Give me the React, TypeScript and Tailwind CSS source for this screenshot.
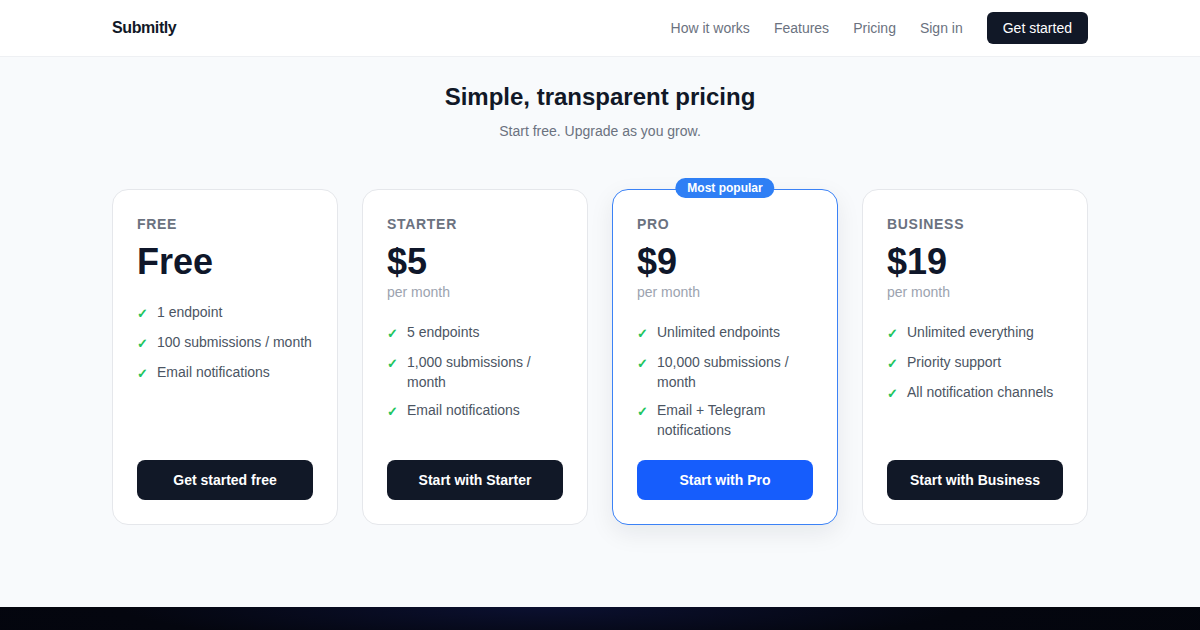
import React from "react";

type Plan = {
  label: string;
  price: string;
  perMonth: boolean;
  features: string[];
  cta: string;
  popular?: boolean;
};

const PLANS: Plan[] = [
  {
    label: "FREE",
    price: "Free",
    perMonth: false,
    features: ["1 endpoint", "100 submissions / month", "Email notifications"],
    cta: "Get started free",
  },
  {
    label: "STARTER",
    price: "$5",
    perMonth: true,
    features: ["5 endpoints", "1,000 submissions / month", "Email notifications"],
    cta: "Start with Starter",
  },
  {
    label: "PRO",
    price: "$9",
    perMonth: true,
    features: ["Unlimited endpoints", "10,000 submissions / month", "Email + Telegram notifications"],
    cta: "Start with Pro",
    popular: true,
  },
  {
    label: "BUSINESS",
    price: "$19",
    perMonth: true,
    features: ["Unlimited everything", "Priority support", "All notification channels"],
    cta: "Start with Business",
  },
];

function PlanCard({ plan }: { plan: Plan }) {
  return (
    <div
      className={
        "relative flex flex-col rounded-2xl border bg-white p-6 " +
        (plan.popular
          ? "border-[#3b82f6] shadow-[0_8px_24px_rgba(15,23,42,0.08)]"
          : "border-[#e5e7eb]")
      }
    >
      {plan.popular && (
        <span className="absolute -top-[12px] left-1/2 -translate-x-1/2 rounded-full bg-[#2f7ff5] px-3 text-[12px] leading-5 font-bold text-white whitespace-nowrap">
          Most popular
        </span>
      )}

      <p className="text-sm font-semibold tracking-wider text-[#6b7280] leading-5">{plan.label}</p>
      <p className="mt-2 text-[36px] leading-10 font-bold text-[#0f172a]">{plan.price}</p>
      {plan.perMonth && <p className="text-sm leading-5 text-[#9ca3af]">per month</p>}

      <ul className="mt-5 mb-5 flex flex-col gap-2">
        {plan.features.map((f) => (
          <li key={f} className="flex items-start gap-2 text-sm leading-5 text-[#4b5563]">
            <span className="mt-[2px] w-3 shrink-0 text-[13px] font-bold text-[#22c55e]">✓</span>
            <span>{f}</span>
          </li>
        ))}
      </ul>

      <button
        className={
          "mt-auto h-10 w-full rounded-lg text-sm font-bold text-white " +
          (plan.popular ? "bg-[#165dfc]" : "bg-[#111827]")
        }
      >
        {plan.cta}
      </button>
    </div>
  );
}

export default function App() {
  return (
    <div className="min-h-[630px] bg-[#f8fafc] font-['Liberation_Sans',Arial,sans-serif]">
      {/* Header */}
      <header className="h-[57px] border-b border-[#eef0f3] bg-white">
        <div className="mx-auto flex h-full w-[976px] items-center justify-between">
          <span className="text-base font-bold tracking-tight text-[#111827]">Submitly</span>
          <nav className="flex items-center gap-6 text-sm text-[#6b7280]">
            <a>How it works</a>
            <a>Features</a>
            <a>Pricing</a>
            <a>Sign in</a>
            <button className="h-8 rounded-md bg-[#111827] px-4 text-sm text-white">Get started</button>
          </nav>
        </div>
      </header>

      {/* Pricing */}
      <section className="pt-6 pb-[82px]">
        <div className="text-center">
          <h1 className="text-2xl leading-8 font-bold text-[#111827]">Simple, transparent pricing</h1>
          <p className="mt-2 text-sm leading-5 text-[#6b7280]">Start free. Upgrade as you grow.</p>
        </div>
        <div className="mx-auto mt-12 grid w-[976px] grid-cols-4 gap-6">
          {PLANS.map((p) => (
            <PlanCard key={p.label} plan={p} />
          ))}
        </div>
      </section>

      {/* Dark band */}
      <div className="h-[60px] bg-[radial-gradient(ellipse_at_45%_0%,#0b1030_0%,#04060f_45%,#03050c_100%)]" />
    </div>
  );
}
